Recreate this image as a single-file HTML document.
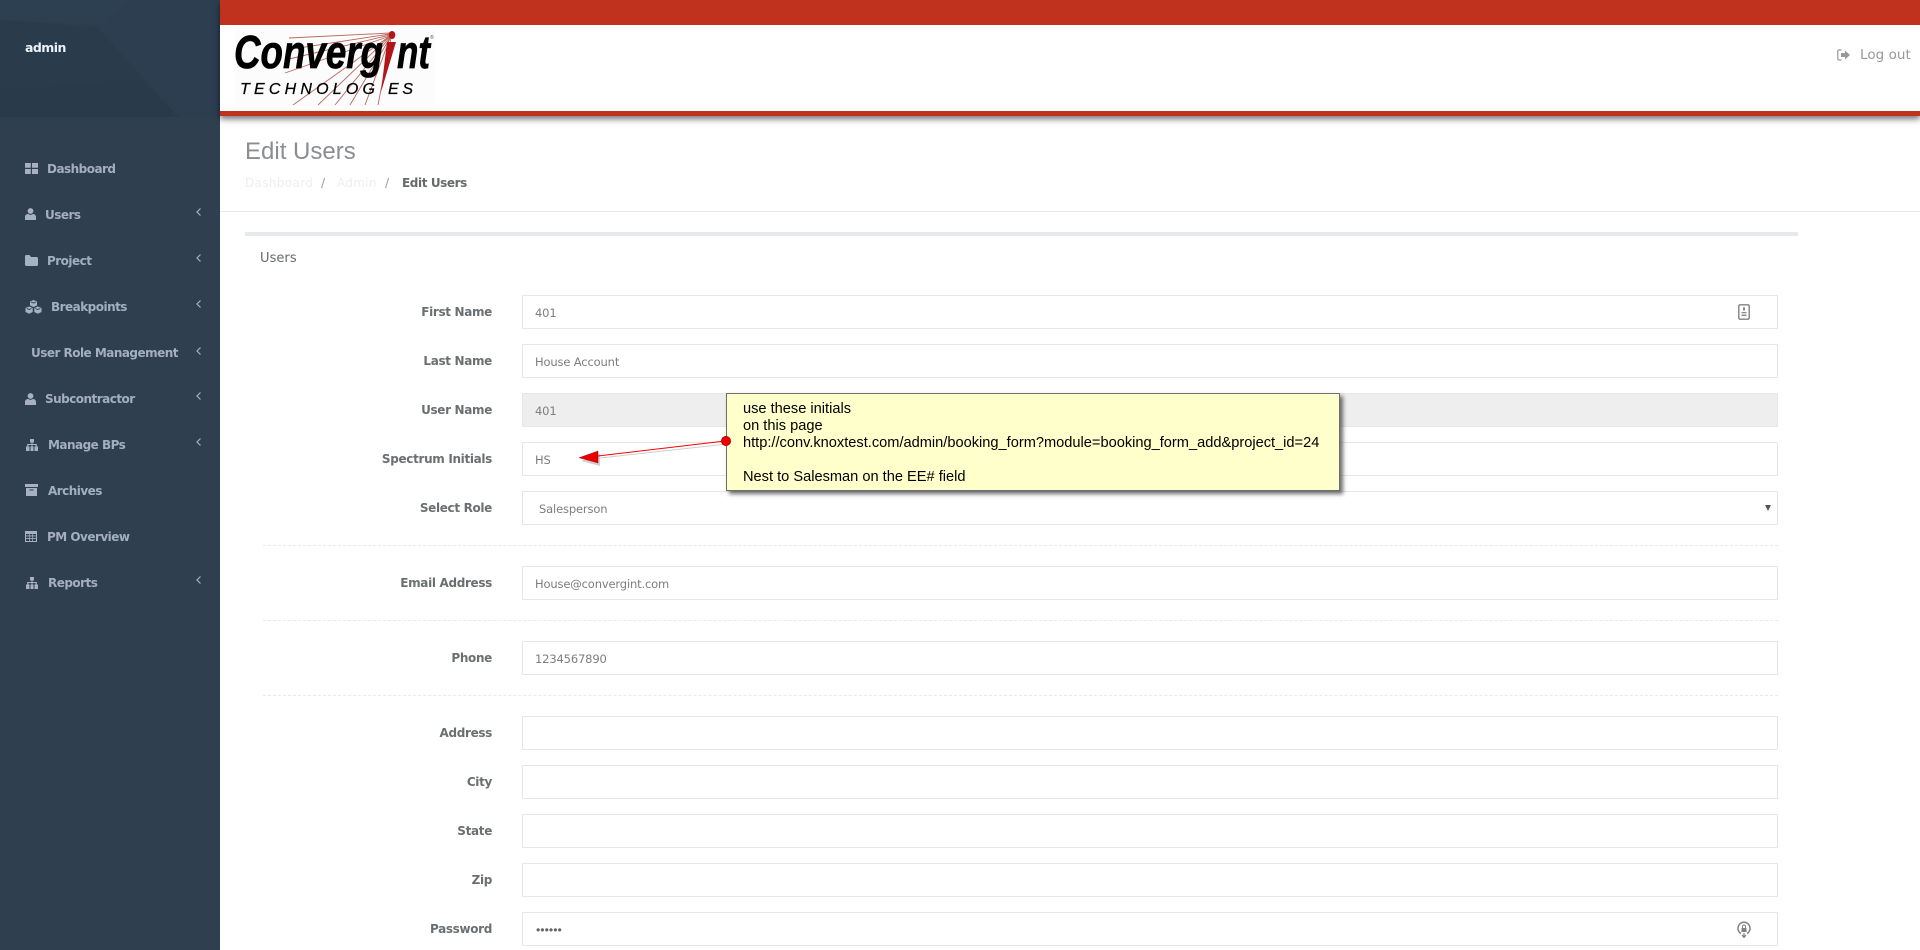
<!DOCTYPE html>
<html lang="en"><head><meta charset="utf-8"><title>Edit Users</title>
<style>
*{box-sizing:border-box}
html,body{margin:0;padding:0;width:1920px;height:950px;overflow:hidden;background:#fff}
body{position:relative;font-family:"DejaVu Sans","Liberation Sans",sans-serif;font-size:12px;color:#676a6c}
.a{position:absolute}
.t{position:absolute;line-height:20px;white-space:nowrap}
#side{left:0;top:0;width:220px;height:950px;background:#303f50}
.n{font-weight:700;color:#a3aebf;font-size:12px;letter-spacing:-.52px;left:0}
.i{position:absolute;fill:#a7b1c2}
.l{position:absolute;right:1428px;line-height:20px;font-weight:700;white-space:nowrap;font-size:12px;letter-spacing:-.33px;color:#6c6f71;margin-top:1px}
.f{position:absolute;left:522px;width:1256px;height:34px;border:1px solid #e5e6e7;border-radius:1px;background:#fff;padding-left:12px;line-height:34px;font-size:11.5px;letter-spacing:-.15px;color:#7d7d7d}
.d{position:absolute;left:263px;width:1515px;border-top:1px dashed #e7eaec;height:0}
#note{left:726px;top:393px;width:614px;height:98px;background:#ffc;border:1px solid #6e6e6e;box-shadow:3px 3px 4px rgba(60,60,60,.75);font-family:"Liberation Sans",Arial,sans-serif;font-size:14.62px;line-height:17px;color:#000;padding:7px 0 0 16px;white-space:pre}
</style></head><body>

<div class="a" id="side"></div>
<svg class="a" style="left:0;top:0" width="220" height="117" viewBox="0 0 220 117">
<rect width="220" height="117" fill="#2b3d4f"/>
<polygon points="0,0 220,0 220,30 100,25 0,20" fill="#2d4051"/>
<polygon points="130,0 220,0 220,117 178,117 98,28" fill="#2c3e50"/>
<polygon points="0,117 178,117 98,28 0,20" fill="#2a3b4c"/>
<polygon points="0,117 178,117 140,80 0,90" fill="#293a4a"/>
</svg>
<div class="t" style="left:25px;top:38px;color:#eaf2fa;font-weight:600;font-size:12.5px;letter-spacing:-.55px">admin</div>

<!-- sidebar icons -->
<svg class="i" style="left:25px;top:163px" width="13" height="11" viewBox="0 0 13 11"><path d="M0 0h5.800v4.800H0zM7 0h6v4.800H7zM0 6h5.800v5H0zM7 6h6v5H7z"/></svg>
<svg class="i" style="left:25px;top:208px" width="11" height="12" viewBox="0 0 11 12"><circle cx="5.500" cy="3" r="2.900"/><path d="M0 12V9c0-2 1.500-3 3-3l2.500 1L8 6c1.500 0 3 1 3 3v3z"/></svg>
<svg class="i" style="left:25px;top:255px" width="13" height="11" viewBox="0 0 13 11"><path d="M0 1.500C0 .6.6 0 1.500 0h3L6 2h5.500c.9 0 1.500.6 1.500 1.500v6c0 .9-.6 1.500-1.500 1.500h-10C.6 11 0 10.400 0 9.500z"/></svg>
<svg class="i" style="left:25px;top:300px" width="17" height="14" viewBox="0 0 17 14"><path d="M8.500 0l3.500 1.500v4L8.500 7 5 5.500v-4z"/><path d="M4.200 6.500l3.500 1.500v4l-3.500 1.700L.5 12V8z"/><path d="M12.800 6.500l3.700 1.500v4l-3.700 1.700L9.300 12V8z"/><path d="M6 2l2.500 1L11 2" fill="none" stroke="#303f50" stroke-width=".9"/><path d="M1.700 8.500l2.500 1 2.300-1M10.300 8.500l2.500 1 2.500-1" fill="none" stroke="#303f50" stroke-width=".9"/></svg>
<svg class="i" style="left:25px;top:393px" width="11" height="12" viewBox="0 0 11 12"><circle cx="5.500" cy="3" r="2.900"/><path d="M0 12V9c0-2 1.500-3 3-3l2.500 1L8 6c1.500 0 3 1 3 3v3z"/></svg>
<svg class="i" style="left:25px;top:439px" width="14" height="12" viewBox="0 0 14 12"><path d="M5 0h4v3.500H7.500v1.500h4.300v2.500H13V12H9.500V7.500h1V6h-3v1.500h1V12H5.500V7.500h1V6h-3v1.500h1V12H1V7.500h1.200V5h4.300V3.500H5z"/></svg>
<svg class="i" style="left:25px;top:484px" width="13" height="12" viewBox="0 0 13 12"><path d="M0 0h13v3H0zM1 4h11v8H1z"/><path d="M4.500 5.500h4v1h-4z" fill="#303f50"/></svg>
<svg class="i" style="left:25px;top:531px" width="12" height="11" viewBox="0 0 12 11"><path fill-rule="evenodd" d="M0 0h12v11H0zM1 3v1.500h3V3zM4.700 3v1.500h2.600V3zM8 3v1.500h3V3zM1 5.400v1.700h3V5.400zM4.700 5.400v1.700h2.600V5.400zM8 5.400v1.700h3V5.400zM1 8v2h3V8zM4.700 8v2h2.600V8zM8 8v2h3V8z"/></svg>
<svg class="i" style="left:25px;top:577px" width="14" height="12" viewBox="0 0 14 12"><path d="M5 0h4v3.500H7.500v1.500h4.300v2.500H13V12H9.500V7.500h1V6h-3v1.500h1V12H5.500V7.500h1V6h-3v1.500h1V12H1V7.500h1.200V5h4.300V3.500H5z"/></svg>

<!-- sidebar labels -->
<div class="t n" style="left:47px;top:159px">Dashboard</div>
<div class="t n" style="left:45px;top:205px">Users</div>
<div class="t n" style="left:47px;top:251px">Project</div>
<div class="t n" style="left:51px;top:297px">Breakpoints</div>
<div class="t n" style="left:31px;top:343px">User Role Management</div>
<div class="t n" style="left:45px;top:389px">Subcontractor</div>
<div class="t n" style="left:48px;top:435px">Manage BPs</div>
<div class="t n" style="left:48px;top:481px">Archives</div>
<div class="t n" style="left:47px;top:527px">PM Overview</div>
<div class="t n" style="left:48px;top:573px">Reports</div>

<!-- chevrons -->
<svg class="a" style="left:195px;top:207px" width="8" height="10" viewBox="0 0 8 10"><path d="M5.500 1.500L2 5l3.500 3.500" fill="none" stroke="#a7b1c2" stroke-width="1.200"/></svg>
<svg class="a" style="left:195px;top:253px" width="8" height="10" viewBox="0 0 8 10"><path d="M5.500 1.500L2 5l3.500 3.500" fill="none" stroke="#a7b1c2" stroke-width="1.200"/></svg>
<svg class="a" style="left:195px;top:299px" width="8" height="10" viewBox="0 0 8 10"><path d="M5.500 1.500L2 5l3.500 3.500" fill="none" stroke="#a7b1c2" stroke-width="1.200"/></svg>
<svg class="a" style="left:195px;top:346px" width="8" height="10" viewBox="0 0 8 10"><path d="M5.500 1.500L2 5l3.500 3.500" fill="none" stroke="#a7b1c2" stroke-width="1.200"/></svg>
<svg class="a" style="left:195px;top:391px" width="8" height="10" viewBox="0 0 8 10"><path d="M5.500 1.500L2 5l3.500 3.500" fill="none" stroke="#a7b1c2" stroke-width="1.200"/></svg>
<svg class="a" style="left:195px;top:437px" width="8" height="10" viewBox="0 0 8 10"><path d="M5.500 1.500L2 5l3.500 3.500" fill="none" stroke="#a7b1c2" stroke-width="1.200"/></svg>
<svg class="a" style="left:195px;top:575px" width="8" height="10" viewBox="0 0 8 10"><path d="M5.500 1.500L2 5l3.500 3.500" fill="none" stroke="#a7b1c2" stroke-width="1.200"/></svg>

<!-- top header -->
<div class="a" style="left:220px;top:0;width:1700px;height:116px;background:#fff;border-top:25px solid #c0321d;border-bottom:5px solid #c0321d;box-shadow:0 3px 6px rgba(0,0,0,.55)"></div>

<!-- logo -->
<svg class="a" style="left:235px;top:30px" width="200" height="75" viewBox="0 0 200 75">
<rect width="200" height="75" fill="#fcfcfc"/>
<g stroke="#b9675d" stroke-width=".9" fill="none">
<path d="M155 3L54 8M155 4L57 19M155 5L50 30M155 6L50 43M155 6L58 75M155 6L83 75M155 7L100 75M155 8L115 75M155 8L130 75M156 8L143 75"/>
</g>
<g font-family="'Liberation Sans',Arial,sans-serif" font-weight="700" font-style="italic" fill="#000" stroke="#000" stroke-width=".7">
<text x="-1" y="38" font-size="46" textLength="149" lengthAdjust="spacingAndGlyphs">Converg</text>
<text x="162" y="38" font-size="46" textLength="33" lengthAdjust="spacingAndGlyphs">nt</text>
</g>
<text x="195" y="9" font-family="'Liberation Sans',sans-serif" font-size="5" fill="#555">®</text>
<ellipse cx="157" cy="5" rx="3.300" ry="4" fill="#b3161a"/>
<polygon points="152,12 161,12 146,62" fill="#b3161a"/>
<g font-family="'Liberation Sans',Arial,sans-serif" font-style="italic" fill="#000" stroke="#000" stroke-width=".25" font-size="16">
<text x="5" y="64" textLength="135">TECHNOLOG</text>
<text x="153" y="64" textLength="25">ES</text>
</g>
</svg>

<!-- logout -->
<svg class="a" style="left:1837px;top:49px" width="14" height="12" viewBox="0 0 14 12"><path d="M4.500 1H2C1.200 1 .8 1.500.8 2.200v7.600C.8 10.500 1.200 11 2 11h2.500" fill="none" stroke="#999" stroke-width="1.200"/><path d="M4 4h4V1.500L13 6l-5 4.500V8H4z" fill="#999"/></svg>
<div class="t" style="left:1860px;top:45px;color:#999;font-size:13.5px;letter-spacing:.05px">Log out</div>

<!-- title -->
<div class="t" style="left:245px;top:138px;line-height:28px;font-family:'Liberation Sans',sans-serif;font-size:24px;color:#8b8d90;font-weight:400">Edit Users</div>
<div class="t" style="left:245px;top:173px;color:#eceef0;font-size:12px;letter-spacing:.35px">Dashboard</div>
<div class="t" style="left:321px;top:173px;color:#999;font-size:12px">/</div>
<div class="t" style="left:337px;top:173px;color:#eceef0;font-size:12px;letter-spacing:.3px">Admin</div>
<div class="t" style="left:385px;top:173px;color:#999;font-size:12px">/</div>
<div class="t" style="left:402px;top:173px;font-weight:700;font-size:12px;letter-spacing:-.4px">Edit Users</div>
<div class="a" style="left:220px;top:211px;width:1700px;height:1px;background:#e7eaec"></div>

<!-- panel -->
<div class="a" style="left:245px;top:232px;width:1553px;height:4px;background:#e7eaec"></div>
<div class="t" style="left:260px;top:249px;font-size:13px;letter-spacing:.05px">Users</div>

<div class="l" style="top:301px">First Name</div><div class="f" style="top:295px">401</div>
<div class="l" style="top:350px">Last Name</div><div class="f" style="top:344px">House Account</div>
<div class="l" style="top:399px">User Name</div><div class="f" style="top:393px;background:#eee">401</div>
<div class="l" style="top:448px">Spectrum Initials</div><div class="f" style="top:442px">HS</div>
<div class="l" style="top:497px">Select Role</div><div class="f" style="top:491px;padding-left:16px">Salesperson</div>
<svg class="a" style="left:1765px;top:505px" width="6" height="6" viewBox="0 0 6 6"><path d="M0 0h6L3 6z" fill="#555"/></svg>
<div class="d" style="top:545px"></div>
<div class="l" style="top:572px">Email Address</div><div class="f" style="top:566px">House@convergint.com</div>
<div class="d" style="top:620px"></div>
<div class="l" style="top:647px">Phone</div><div class="f" style="top:641px">1234567890</div>
<div class="d" style="top:695px"></div>
<div class="l" style="top:722px">Address</div><div class="f" style="top:716px"></div>
<div class="l" style="top:771px">City</div><div class="f" style="top:765px"></div>
<div class="l" style="top:820px">State</div><div class="f" style="top:814px"></div>
<div class="l" style="top:869px">Zip</div><div class="f" style="top:863px"></div>
<div class="l" style="top:918px">Password</div><div class="f" style="top:912px;font-family:'Liberation Sans',sans-serif;font-size:12.3px;letter-spacing:0;padding-left:13px;color:#666">••••••</div>

<!-- input icons -->
<svg class="a" style="left:1738px;top:304px" width="12" height="16" viewBox="0 0 12 16"><rect x=".8" y=".8" width="10.400" height="14.400" rx="1.300" fill="none" stroke="#808080" stroke-width="1.400"/><path d="M5 4l1-1.500L7 4v2.500H5zM3.500 8h5v1.300h-5zM3.500 10.500h5v1.500h-5z" fill="#8a8a8a"/></svg>
<svg class="a" style="left:1737px;top:920px" width="14" height="18" viewBox="0 0 14 18"><path d="M4 13.500A6 6 0 1 1 10 13.500" fill="none" stroke="#808080" stroke-width="1.500"/><path d="M4.500 8h5v4h-5z" fill="#808080"/><path d="M5.500 8V6.500a1.500 1.500 0 0 1 3 0V8" fill="none" stroke="#808080"/><path d="M7 13v4M5 15l2 2.500L9 15" fill="none" stroke="#808080" stroke-width="1.200"/></svg>

<!-- annotation -->
<svg class="a" style="left:570px;top:430px" width="170" height="45" viewBox="0 0 170 45">
<g fill="#777" opacity=".35" transform="translate(2,3)"><path d="M28 25l127-14" stroke="#777" stroke-width="1"/><polygon points="9,28 28,21 28,33"/></g>
<path d="M28 26l127-15" stroke="#f00" stroke-width="1"/>
<polygon points="9,27.700 28,21 28,33" fill="#e60000" stroke="#a00" stroke-width=".4"/>
</svg>
<div class="a" id="note">use these initials
on this page
http://conv.knoxtest.com/admin/booking_form?module=booking_form_add&amp;project_id=24

Nest to Salesman on the EE# field</div>
<svg class="a" style="left:720px;top:435px" width="12" height="12" viewBox="0 0 12 12"><circle cx="6" cy="6" r="4.600" fill="#f00000" stroke="#900" stroke-width=".8"/></svg>

</body></html>
